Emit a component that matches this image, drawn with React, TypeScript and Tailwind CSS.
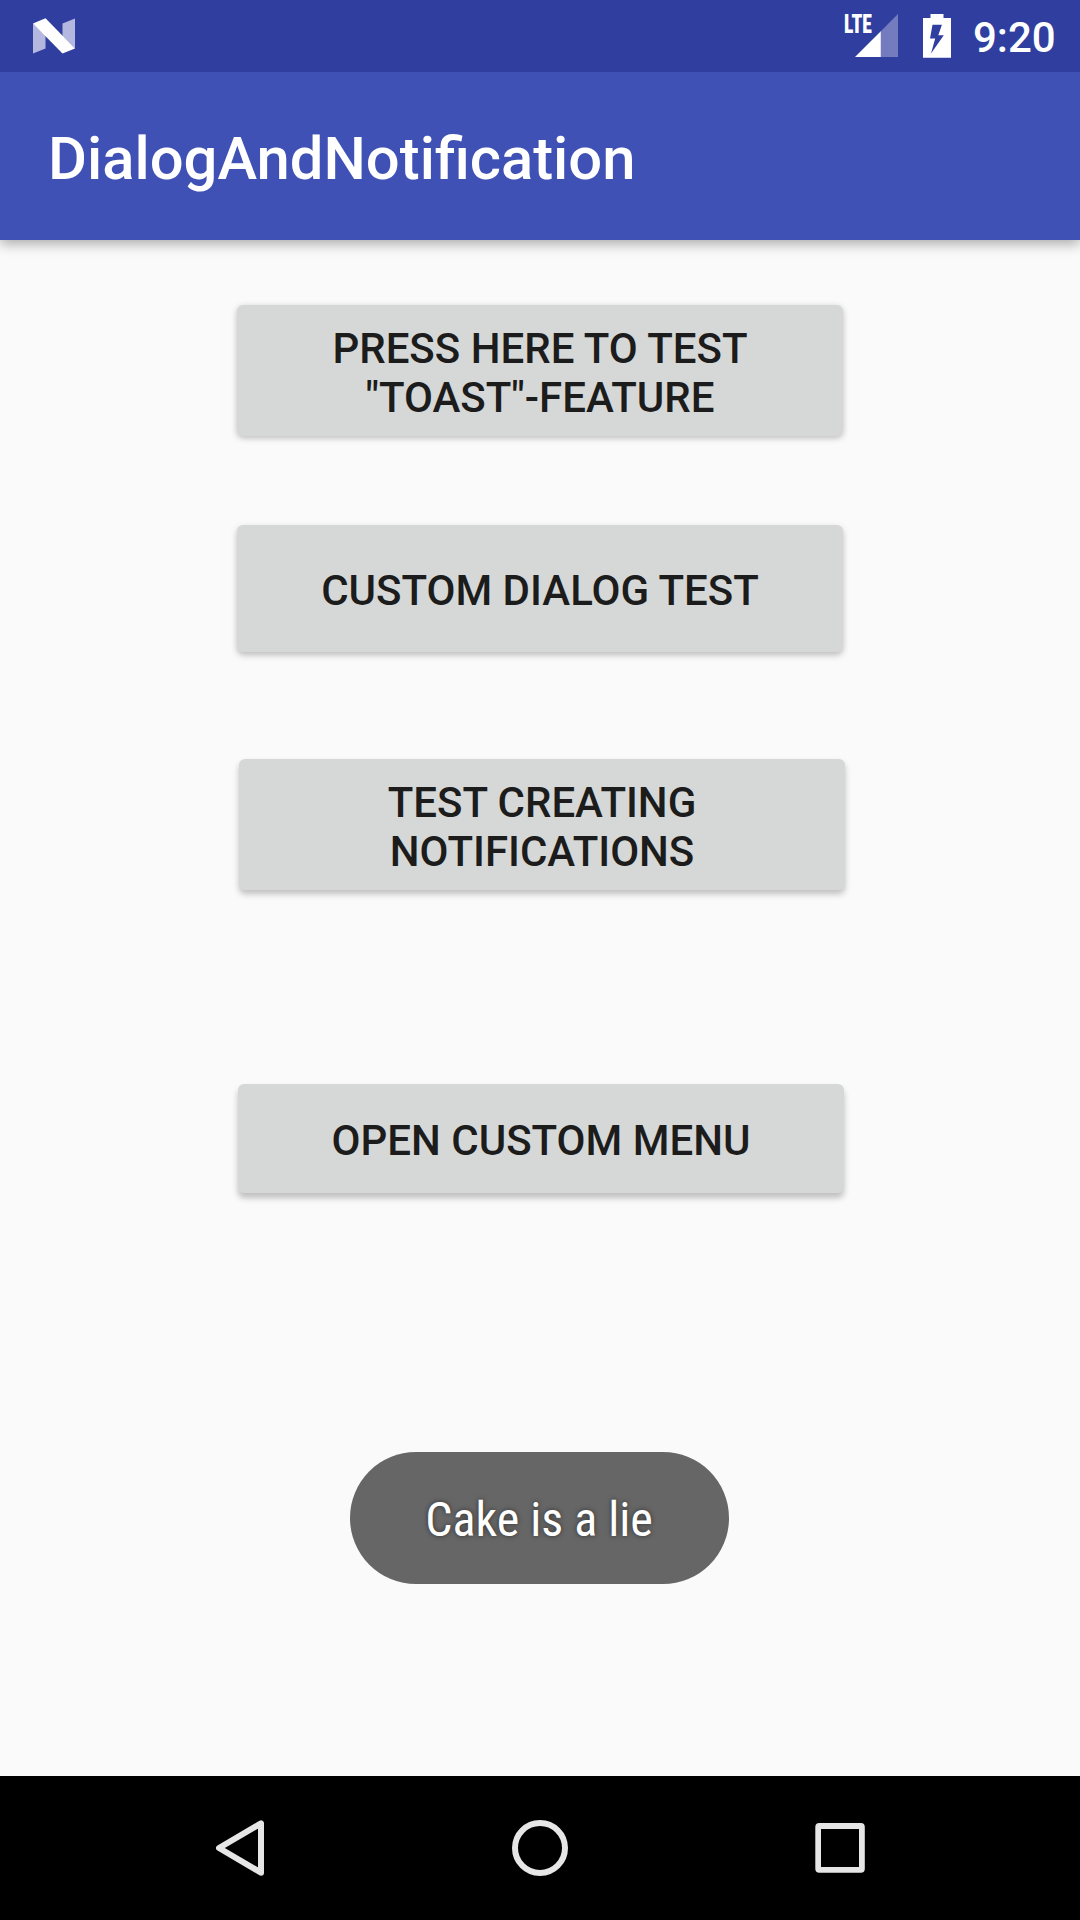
import type { ReactNode } from "react";

function StatusBar() {
  return (
    <div className="relative z-20 flex h-[72px] shrink-0 items-start bg-[#303f9f] pl-[32px] text-white">
      <svg className="mt-[17px] h-[38px] w-[44px] shrink-0" viewBox="0 0 44 38">
        <path d="M1 6.5 13.5 17V31.5L1 36.5ZM30.5 6.5 43 1.5V31.5L30.5 19Z" fill="#b5b8de" />
        <path d="M1 6.5 13.5 1.3 43 31.5 30.5 36.5Z" fill="#fff" />
      </svg>
      <div className="ml-auto flex items-start">
        <div className="relative mt-[14px] h-[44px] w-[54px]">
          <svg className="h-[44px] w-[54px]" viewBox="0 0 54 44">
            <path d="M34.8 17.3 52 0V43H34.8Z" fill="#747cbf" />
            <path d="M9 43 34.8 17.3V43Z" fill="#fff" />
          </svg>
          <span className="absolute top-[-4px] left-[-2px] origin-left scale-x-[0.77] text-[25.5px] leading-[29px] font-black [font-stretch:75%]">LTE</span>
        </div>
        <svg className="mt-[14px] ml-[23px] h-[44px] w-[29px]" viewBox="0 0 29 44">
          <path fillRule="evenodd" fill="#fff" d="M7.5 0H20.5V4H28V43.7H0V4H7.5ZM9.5 10.7 7 24.5H12.2L8 39.5 20.8 21.3H15.3L18.9 10.7Z" />
        </svg>
        <span className="mt-[13px] mr-[23px] ml-[21px] w-[84px] text-[42px] leading-[49px] font-medium">9:20</span>
      </div>
    </div>
  );
}

function RaisedButton({ className, children }: { className: string; children: ReactNode }) {
  return (
    <button
      className={`block w-[606px] shrink-0 rounded-[6px] bg-[#d6d8d7] text-center align-top text-[42px] leading-[49px] font-medium text-[#1c1c1c] ${className}`}
    >
      {children}
    </button>
  );
}

export default function App() {
  return (
    <div className="flex h-[1920px] w-[1080px] flex-col overflow-hidden bg-[#fafafa] font-['Roboto',sans-serif]">
      <StatusBar />
      <header className="z-10 h-[168px] shrink-0 bg-[#3f51b5] pt-[51px] pl-[48px] shadow-[0_4px_12px_rgba(0,0,0,0.32)]">
        <h1 className="text-[59.75px] leading-[72px] font-medium text-white">DialogAndNotification</h1>
      </header>
      <main className="flex flex-1 flex-col items-start">
        <RaisedButton className="mt-[65px] ml-[237px] h-[131px] pt-[19px] pb-[14px] shadow-[0_2px_6px_rgba(0,0,0,0.25)]">
          PRESS HERE TO TEST
          <br />
          "TOAST"-FEATURE
        </RaisedButton>
        <RaisedButton className="mt-[89px] ml-[237px] h-[127px] pt-[41px] pb-[37px] shadow-[0_3px_6px_rgba(0,0,0,0.25)]">
          CUSTOM DIALOG TEST
        </RaisedButton>
        <RaisedButton className="mt-[107px] ml-[239px] h-[131px] pt-[19px] pb-[14px] shadow-[0_4px_6px_rgba(0,0,0,0.24)]">
          TEST CREATING
          <br />
          NOTIFICATIONS
        </RaisedButton>
        <RaisedButton className="mt-[194px] ml-[238px] h-[109px] pt-[32px] pb-[28px] shadow-[0_5px_6px_rgba(0,0,0,0.24)]">
          OPEN CUSTOM MENU
        </RaisedButton>
        <div className="mt-[259px] ml-[350px] flex h-[132px] w-[379px] justify-center rounded-full bg-[#666] pt-[40px]">
          <span className="mr-px text-[48px] leading-[56px] whitespace-nowrap text-white [font-stretch:75%] [text-shadow:0_0_5px_rgba(0,0,0,0.55)]">
            Cake is a lie
          </span>
        </div>
      </main>
      <nav className="flex h-[144px] shrink-0 items-start bg-black pt-[44px] pl-[216px]">
        <svg className="h-[56px] w-[48px]" viewBox="0 0 48 56" fill="none" stroke="#e6e6e6" strokeWidth="6" strokeLinejoin="round">
          <path d="M45 3.3V52.7L3 28Z" />
        </svg>
        <svg className="ml-[248px] h-[56px] w-[56px]" viewBox="0 0 56 56" fill="none" stroke="#e6e6e6" strokeWidth="6">
          <circle cx="28" cy="28" r="25" />
        </svg>
        <svg className="mt-[3px] ml-[247px] h-[50px] w-[50px]" viewBox="0 0 50 50">
          <rect x="0.3" width="49.5" height="49.7" rx="4" fill="#e6e6e6" />
          <rect x="6" y="6" width="38" height="38" fill="#000" />
        </svg>
      </nav>
    </div>
  );
}
